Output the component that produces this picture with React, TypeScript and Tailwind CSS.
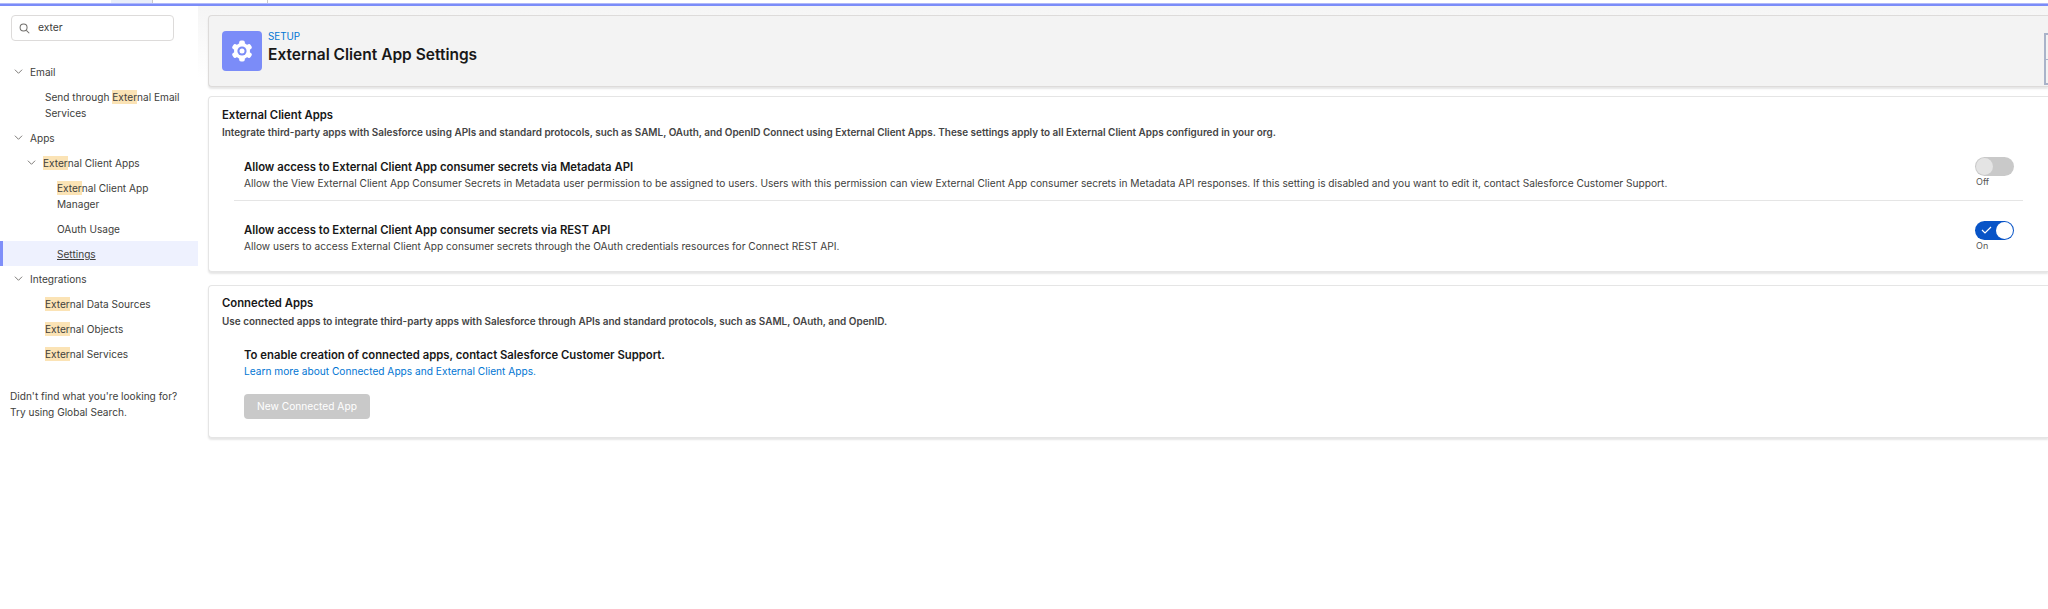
import React from "react";

const Hl = ({ c = "Exter" }: { c?: string }) => <span className="bg-[#fbe3b5] py-px">{c}</span>;

const Chevron = () => (
  <svg width="9" height="9" viewBox="0 0 10 10" fill="none" stroke="#706e6b" strokeWidth="1" className="shrink-0">
    <path d="M1 3 L5 7 L9 3" />
  </svg>
);

const Row = ({ indent, chevron, children, active }: { indent: string; chevron?: boolean; children: React.ReactNode; active?: boolean }) => (
  <div className={`flex items-start py-[4.5px] leading-4 whitespace-nowrap ${indent} ${active ? "bg-[#eef1fe] border-l-[3px] border-[#7f8ff9]" : ""}`}>
    {chevron && <span className="w-[16px] h-4 flex items-center shrink-0"><Chevron /></span>}
    <div>{children}</div>
  </div>
);

const Toggle = ({ on }: { on: boolean }) => (
  <div className="flex flex-col w-[39px]">
    {on ? (
      <div className="w-[39px] h-[19px] rounded-full bg-[#0854c7] flex items-center justify-between pl-[6px] pr-px">
        <svg width="11" height="8" viewBox="0 0 11 8" fill="none" stroke="#fff" strokeWidth="1.2"><path d="M1 4 L4 7 L10 1" /></svg>
        <div className="w-[17px] h-[17px] rounded-full bg-white" />
      </div>
    ) : (
      <div className="w-[39px] h-[19px] rounded-full bg-[#c9c9c9] flex items-center pl-px">
        <div className="w-[17px] h-[17px] rounded-full bg-[#e4e4e4]" />
      </div>
    )}
    <span className="text-[9px] leading-3 text-[#555] pl-px">{on ? "On" : "Off"}</span>
  </div>
);

export default function App() {
  return (
    <div className="w-[2048px] h-[609px] bg-white overflow-hidden font-['Inter',sans-serif] text-[#3e3e3c]">
      <div className="h-[3px] flex bg-white">
        <div className="w-[111px]" />
        <div className="w-[42px] bg-[#e9eefa] border-r border-[#c9c9c9]" />
        <div className="w-[115px] border-r border-[#c9c9c9]" />
      </div>
      <div className="h-[3px] bg-[#7b8cf8] border-t border-[#b0b9fa]" />
      <div className="flex h-[603px]">
        <aside className="w-[198px] shrink-0 text-[10.1px]">
          <div className="ml-[11px] w-[163px] mt-[9px] h-[26px] rounded-[4px] border border-[#dddbda] flex items-center pl-[7px] gap-[8px]">
            <svg width="11" height="11" viewBox="0 0 12 12" fill="none" stroke="#706e6b" strokeWidth="1.1"><circle cx="5" cy="5" r="3.8" /><path d="M8 8 L11.2 11.2" /></svg>
            <span className="text-[10.3px]">exter</span>
          </div>
          <div className="mt-[18px]">
            <Row indent="pl-[14px]" chevron>Email</Row>
            <Row indent="pl-[45px]">Send through <Hl />nal Email<br />Services</Row>
            <Row indent="pl-[14px]" chevron>Apps</Row>
            <Row indent="pl-[27px]" chevron><Hl />nal Client Apps</Row>
            <Row indent="pl-[57px]"><Hl />nal Client App<br />Manager</Row>
            <Row indent="pl-[57px]">OAuth Usage</Row>
            <Row indent="pl-[54px]" active><span className="underline">Settings</span></Row>
            <Row indent="pl-[14px]" chevron>Integrations</Row>
            <Row indent="pl-[45px]"><Hl />nal Data Sources</Row>
            <Row indent="pl-[45px]"><Hl />nal Objects</Row>
            <Row indent="pl-[45px]"><Hl />nal Services</Row>
          </div>
          <div className="pl-[10px] mt-[22px] leading-4 whitespace-nowrap">
            <div>Didn't find what you're looking for?</div>
            <div>Try using Global Search.</div>
          </div>
        </aside>
        <main className="flex-1 min-w-0 pl-[10px] pt-[9px] bg-gradient-to-b from-[#f5f5f5] to-white to-[12%]">
          <div className="relative h-[72px] rounded-l-[4px] bg-[#f3f3f3] border border-[#dddbda] border-r-0 shadow-[0_2px_2px_rgba(0,0,0,0.1)] flex items-center pl-[13px] gap-[6px]">
            <div className="w-[40px] h-[40px] rounded-[4px] bg-[#7b8cf8] flex items-center justify-center">
              <svg width="24" height="24" viewBox="0 0 24 24" fill="#fff">
                <circle cx="12" cy="12" r="8" />
                {[0, 60, 120, 180, 240, 300].map((a) => (
                  <rect key={a} x="9.2" y="1.5" width="5.6" height="6" rx="1.8" transform={`rotate(${a} 12 12)`} />
                ))}
                <circle cx="12" cy="12" r="4.6" fill="#7b8cf8" />
                <circle cx="12" cy="12" r="2.5" />
              </svg>
            </div>
            <div className="pb-[7px]">
              <div className="text-[9.8px] leading-3 text-[#0176d3]">SETUP</div>
              <h1 className="text-[15.5px] leading-5 font-semibold text-[#181818] mt-[2px]">External Client App Settings</h1>
            </div>
            <div className="absolute right-0 top-[17px] w-[4px] h-[52px] border-2 border-r-0 border-[#a9b3c9] flex items-center">
              <div className="h-px w-full bg-[#a9b3c9]" />
            </div>
          </div>
          <section className="mt-[9px] h-[176px] rounded-l-[4px] bg-white border border-[#e5e5e5] border-r-0 shadow-[0_2px_2px_rgba(0,0,0,0.1)] pl-[13px] pt-[10px]">
            <h2 className="text-[11.3px] leading-4 font-semibold text-[#181818]">External Client Apps</h2>
            <p className="text-[9.95px] leading-3 font-semibold text-[#444] mt-[3px]">Integrate third-party apps with Salesforce using APIs and standard protocols, such as SAML, OAuth, and OpenID Connect using External Client Apps. These settings apply to all External Client Apps configured in your org.</p>
            <div className="mt-[20.5px] ml-[12px] mr-[25px] pl-[10px] pr-[9px] pb-[9px] border-b border-[#e5e5e5] flex justify-between">
              <div>
                <h3 className="text-[11.3px] leading-4 font-semibold text-[#181818]">Allow access to External Client App consumer secrets via Metadata API</h3>
                <p className="text-[10.17px] leading-4 text-[#3e3e3c]">Allow the View External Client App Consumer Secrets in Metadata user permission to be assigned to users. Users with this permission can view External Client App consumer secrets in Metadata API responses. If this setting is disabled and you want to edit it, contact Salesforce Customer Support.</p>
              </div>
              <div className="w-[39px] shrink-0 -mt-[2px] -mb-[2px]"><Toggle on={false} /></div>
            </div>
            <div className="mt-[21px] ml-[22px] mr-[25px] pr-[9px] flex justify-between">
              <div>
                <h3 className="text-[11.3px] leading-4 font-semibold text-[#181818]">Allow access to External Client App consumer secrets via REST API</h3>
                <p className="text-[10.17px] leading-4 text-[#3e3e3c]">Allow users to access External Client App consumer secrets through the OAuth credentials resources for Connect REST API.</p>
              </div>
              <div className="w-[39px] shrink-0 -mt-[1px]"><Toggle on /></div>
            </div>
          </section>
          <section className="mt-[13px] h-[153px] rounded-l-[4px] bg-white border border-[#e5e5e5] border-r-0 shadow-[0_2px_2px_rgba(0,0,0,0.1)] pl-[13px] pt-[9px]">
            <h2 className="text-[11.3px] leading-4 font-semibold text-[#181818]">Connected Apps</h2>
            <p className="text-[9.95px] leading-3 font-semibold text-[#444] mt-[3.5px]">Use connected apps to integrate third-party apps with Salesforce through APIs and standard protocols, such as SAML, OAuth, and OpenID.</p>
            <div className="pl-[22px] mt-[20.5px]">
              <h3 className="text-[11.3px] leading-4 font-semibold text-[#181818]">To enable creation of connected apps, contact Salesforce Customer Support.</h3>
              <a className="block text-[10.17px] leading-4 text-[#0176d3]">Learn more about Connected Apps and External Client Apps.</a>
              <button className="mt-[15px] w-[126px] h-[25px] rounded-[4px] bg-[#c9c9c9] text-white text-[10.2px]">New Connected App</button>
            </div>
          </section>
        </main>
      </div>
    </div>
  );
}
